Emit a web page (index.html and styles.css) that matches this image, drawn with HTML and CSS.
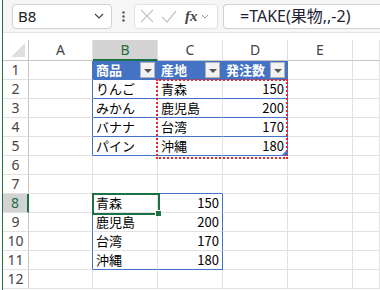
FILE: index.html
```html
<!DOCTYPE html>
<html lang="ja">
  <head>
    <meta charset="UTF-8" />
    <meta name="viewport" content="width=device-width, initial-scale=1.0" />
    <title>TAKE関数</title>
    <link rel="stylesheet" href="styles.css">
  </head>
  <body>
    <div class="window">
      <!-- 数式バー -->
      <div class="formula-bar">
        <div class="name-box">
          <span>B8</span>
          <svg width="10" height="6" viewBox="0 0 10 6"><path d="M1 1l4 4 4-4" fill="none" stroke="#444" stroke-width="1.2"/></svg>
        </div>
        <div class="more">
          <svg width="3" height="11" viewBox="0 0 3 11"><circle cx="1.5" cy="1.5" r="1.2" fill="#555"/><circle cx="1.5" cy="5.5" r="1.2" fill="#555"/><circle cx="1.5" cy="9.5" r="1.2" fill="#555"/></svg>
        </div>
        <div class="fx-box">
          <svg width="14" height="14" viewBox="0 0 14 14"><path d="M1 1l12 12M13 1L1 13" stroke="#c4c4c4" stroke-width="1.2"/></svg>
          <svg width="16" height="13" viewBox="0 0 16 13"><path d="M1 7l5 5L15 1" fill="none" stroke="#c4c4c4" stroke-width="1.2"/></svg>
          <span class="fx">fx</span>
          <svg width="8" height="5" viewBox="0 0 8 5"><path d="M1 1l3 3 3-3" fill="none" stroke="#9a9a9a" stroke-width="1"/></svg>
        </div>
        <div class="formula">=TAKE(果物,,-2)</div>
      </div>

      <!-- シート -->
      <div class="sheet">
        <div class="c corner"></div>
        <div class="c ch">A</div>
        <div class="c ch sel">B</div>
        <div class="c ch">C</div>
        <div class="c ch">D</div>
        <div class="c ch">E</div>
        <div class="c ch"></div>

        <div class="c rh">1</div>
        <div class="c tb-l"></div>
        <div class="c th">商品<i class="drop"></i></div>
        <div class="c th">産地<i class="drop"></i></div>
        <div class="c th tb-r">発注数<i class="drop"></i></div>
        <div class="c"></div>
        <div class="c"></div>

        <div class="c rh">2</div>
        <div class="c tb-l"></div>
        <div class="c td">りんご</div>
        <div class="c td">青森</div>
        <div class="c td num tb-r">150</div>
        <div class="c"></div>
        <div class="c"></div>

        <div class="c rh">3</div>
        <div class="c tb-l"></div>
        <div class="c td">みかん</div>
        <div class="c td">鹿児島</div>
        <div class="c td num tb-r">200</div>
        <div class="c"></div>
        <div class="c"></div>

        <div class="c rh">4</div>
        <div class="c tb-l"></div>
        <div class="c td">バナナ</div>
        <div class="c td">台湾</div>
        <div class="c td num tb-r">170</div>
        <div class="c"></div>
        <div class="c"></div>

        <div class="c rh">5</div>
        <div class="c tb-l"></div>
        <div class="c td">パイン</div>
        <div class="c td">沖縄</div>
        <div class="c td num tb-r">180</div>
        <div class="c"></div>
        <div class="c"></div>

        <div class="c rh">6</div>
        <div class="c"></div>
        <div class="c"></div>
        <div class="c"></div>
        <div class="c"></div>
        <div class="c"></div>
        <div class="c"></div>

        <div class="c rh">7</div>
        <div class="c"></div>
        <div class="c sp-b"></div>
        <div class="c sp-b"></div>
        <div class="c"></div>
        <div class="c"></div>
        <div class="c"></div>

        <div class="c rh sel">8</div>
        <div class="c sp-l"></div>
        <div class="c">青森</div>
        <div class="c num sp-r">150</div>
        <div class="c"></div>
        <div class="c"></div>
        <div class="c"></div>

        <div class="c rh">9</div>
        <div class="c sp-l"></div>
        <div class="c">鹿児島</div>
        <div class="c num sp-r">200</div>
        <div class="c"></div>
        <div class="c"></div>
        <div class="c"></div>

        <div class="c rh">10</div>
        <div class="c sp-l"></div>
        <div class="c">台湾</div>
        <div class="c num sp-r">170</div>
        <div class="c"></div>
        <div class="c"></div>
        <div class="c"></div>

        <div class="c rh">11</div>
        <div class="c sp-l"></div>
        <div class="c sp-b">沖縄</div>
        <div class="c num sp-r sp-b">180</div>
        <div class="c"></div>
        <div class="c"></div>
        <div class="c"></div>

        <div class="c rh">12</div>
        <div class="c"></div>
        <div class="c"></div>
        <div class="c"></div>
        <div class="c"></div>
        <div class="c"></div>
        <div class="c"></div>

        <!-- コピー範囲と選択セル -->
        <div class="marquee"></div>
        <div class="cursor"></div>
        <div class="resize"></div>
      </div>
    </div>
  </body>
</html>
```

FILE: styles.css
```css
/* styles.css */
body {
  margin: 0;
  background: #fff;
  font-family: "Noto Sans", "Noto Sans CJK JP", sans-serif;
  width: 380px;
  height: 290px;
  overflow: hidden;
}

.window {
  margin-left: 2px;
  border-left: 1px solid #1e7145;
  height: 290px;
}

.formula-bar {
  display: flex;
  align-items: center;
  height: 32px;
  padding: 0 0 0 9px;
  background: #f6f6f6;
  border-bottom: 1px solid #e3e3e3;
  margin-bottom: 7px;
}

.name-box {
  box-sizing: border-box;
  width: 100px;
  height: 25px;
  background: #fff;
  border: 1px solid #d1d1d1;
  border-radius: 4px;
  display: flex;
  align-items: center;
  justify-content: space-between;
  padding: 0 7px 0 5px;
  font-size: 15px;
  color: #222;
}

.more {
  width: 22px;
  display: flex;
  justify-content: center;
}

.fx-box {
  box-sizing: border-box;
  width: 84px;
  height: 25px;
  background: #fff;
  border: 1px solid #e1e1e1;
  border-radius: 4px;
  display: flex;
  align-items: center;
  gap: 7px;
  padding-left: 5px;
}

.fx {
  font-family: "Liberation Serif", serif;
  font-style: italic;
  font-weight: bold;
  font-size: 15px;
  color: #444;
  margin-left: 1px;
  margin-right: -4px;
}

.formula {
  flex: 1;
  box-sizing: border-box;
  height: 25px;
  margin-left: 5px;
  background: #fff;
  border: 1px solid #d1d1d1;
  border-right: none;
  border-radius: 4px 0 0 4px;
  padding-left: 16px;
  font-size: 16px;
  line-height: 22px;
  color: #1d2333;
  font-family: "Noto Sans", "Noto Sans CJK JP", sans-serif;
}

.sheet {
  position: relative;
  display: grid;
  grid-template-columns: 26px 64px 65px 65px 65px 65px 1fr;
  grid-template-rows: 21px;
  grid-auto-rows: 19px;
  font-family: "Noto Sans CJK JP", sans-serif;
  font-size: 13px;
  color: #000;
}

.c {
  box-sizing: border-box;
  border-right: 1px solid #e1e1e1;
  border-bottom: 1px solid #e1e1e1;
  padding: 0 3px;
  line-height: 18px;
  white-space: nowrap;
  overflow: hidden;
}

.ch {
  text-align: center;
  color: #444;
  font-family: "Noto Sans", sans-serif;
  font-size: 14px;
  line-height: 20px;
  border-bottom-color: #c6c6c6;
}

.ch.sel {
  background: #d3d3d3;
  border-bottom: 2px solid #1e7145;
  color: #1e6f42;
}

.corner {
  position: relative;
  border-right-color: #c6c6c6;
  border-bottom-color: #c6c6c6;
}

.corner::after {
  content: "";
  position: absolute;
  right: 3px;
  bottom: 3px;
  border-left: 14px solid transparent;
  border-bottom: 14px solid #dfdfdf;
}

.rh {
  padding: 0;
  text-align: center;
  color: #444;
  font-family: "Noto Sans", sans-serif;
  font-size: 14px;
  border-right-color: #c6c6c6;
}

.rh.sel {
  background: #d3d3d3;
  border-right: 2px solid #1e7145;
  color: #1e6f42;
}

.num {
  text-align: right;
}

/* テーブル */
.th {
  position: relative;
  background: #4472c4;
  color: #fff;
  font-weight: bold;
  border-right-color: #4472c4;
  border-bottom-color: #4472c4;
}

.drop {
  position: absolute;
  right: 2px;
  top: 1px;
  box-sizing: border-box;
  width: 15px;
  height: 16px;
  background: #f2f2f2;
  border: 1px solid #b3b3b3;
}

.drop::after {
  content: "";
  position: absolute;
  left: 3px;
  top: 6px;
  border-left: 4px solid transparent;
  border-right: 4px solid transparent;
  border-top: 4px solid #555;
}

.td {
  border-bottom-color: #4472c4;
}

.tb-l {
  border-right-color: #4472c4;
}

.tb-r {
  border-right-color: #4472c4;
}

/* スピル範囲 */
.sp-l {
  border-right-color: #4472c4;
}

.sp-r {
  border-right-color: #4472c4;
}

.sp-b {
  border-bottom-color: #4472c4;
}

/* 重ねて描くもの */
.marquee {
  position: absolute;
  grid-column: 4 / 6;
  grid-row: 3 / 7;
  top: -1px;
  left: -2px;
  right: 0;
  bottom: -3px;
  border: 2px dotted #e8262b;
}

.cursor {
  position: absolute;
  grid-column: 3 / 4;
  grid-row: 9 / 10;
  top: -1px;
  left: -1px;
  right: -2px;
  bottom: -2px;
  border: 2px solid #1e7145;
}

.cursor::after {
  content: "";
  position: absolute;
  right: -4px;
  bottom: -4px;
  width: 5px;
  height: 5px;
  background: #1e7145;
  border: 1px solid #fff;
}

.resize {
  position: absolute;
  grid-column: 5 / 6;
  grid-row: 6 / 7;
  right: 1px;
  bottom: 1px;
  border-left: 5px solid transparent;
  border-bottom: 5px solid #4472c4;
}
```
